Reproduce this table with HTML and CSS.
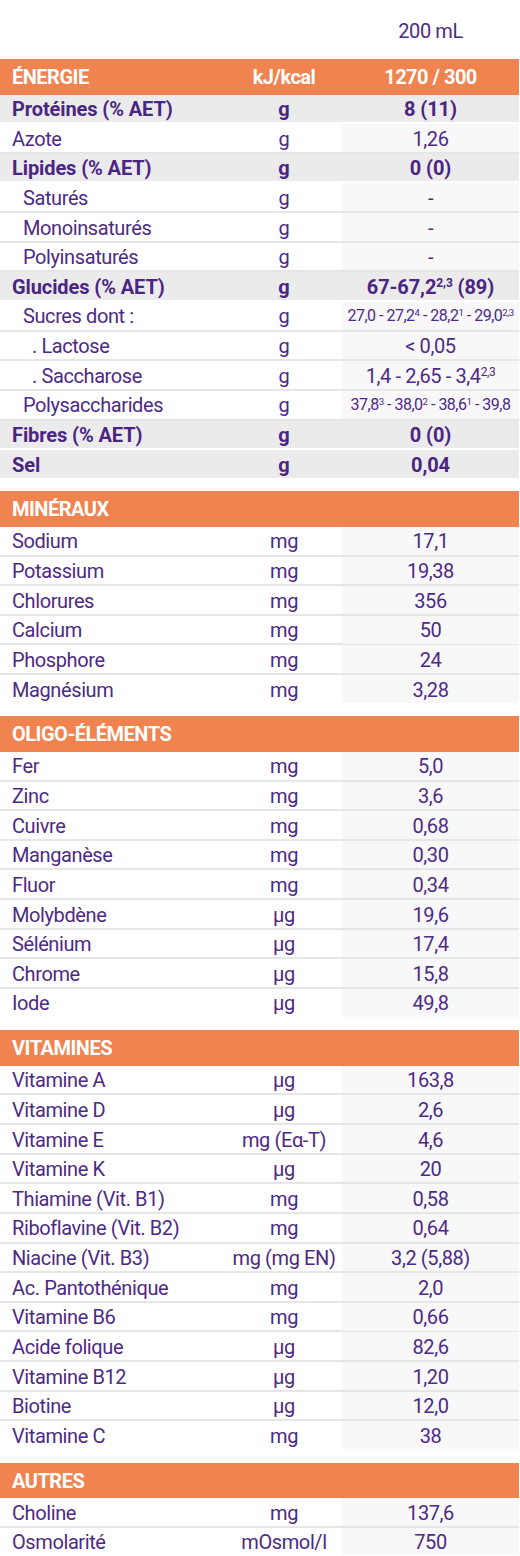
FILE: index.html
```html
<!DOCTYPE html>
<html lang="fr">
<head>
<meta charset="utf-8">
<link rel="stylesheet" href="styles.css">
</head>
<body>
<div class="page">
  <div class="top"><span class="c1"></span><span class="c2"></span><span class="c3">200 mL</span></div>

  <section class="sec">
    <div class="head"><span class="c1">ÉNERGIE</span><span class="c2">kJ/kcal</span><span class="c3">1270 / 300</span></div>
    <div class="row b"><span class="c1">Protéines (% AET)</span><span class="c2">g</span><span class="c3">8 (11)</span></div>
    <div class="row"><span class="c1">Azote</span><span class="c2">g</span><span class="c3">1,26</span></div>
    <div class="row b"><span class="c1">Lipides (% AET)</span><span class="c2">g</span><span class="c3">0 (0)</span></div>
    <div class="row"><span class="c1 i1">Saturés</span><span class="c2">g</span><span class="c3">-</span></div>
    <div class="row"><span class="c1 i1">Monoinsaturés</span><span class="c2">g</span><span class="c3">-</span></div>
    <div class="row"><span class="c1 i1">Polyinsaturés</span><span class="c2">g</span><span class="c3">-</span></div>
    <div class="row b"><span class="c1">Glucides (% AET)</span><span class="c2">g</span><span class="c3">67-67,2<sup>2,3</sup> (89)</span></div>
    <div class="row"><span class="c1 i1">Sucres dont :</span><span class="c2">g</span><span class="c3 sm">27,0 - 27,2<sup>4</sup> - 28,2<sup>1</sup> - 29,0<sup>2,3</sup></span></div>
    <div class="row"><span class="c1 i2">. Lactose</span><span class="c2">g</span><span class="c3">&lt; 0,05</span></div>
    <div class="row"><span class="c1 i2">. Saccharose</span><span class="c2">g</span><span class="c3">1,4 - 2,65 - 3,4<sup>2,3</sup></span></div>
    <div class="row"><span class="c1 i1">Polysaccharides</span><span class="c2">g</span><span class="c3 sm">37,8<sup>3</sup> - 38,0<sup>2</sup> - 38,6<sup>1</sup> - 39,8</span></div>
    <div class="row b"><span class="c1">Fibres (% AET)</span><span class="c2">g</span><span class="c3">0 (0)</span></div>
    <div class="row b"><span class="c1">Sel</span><span class="c2">g</span><span class="c3">0,04</span></div>
  </section>

  <section class="sec">
    <div class="head"><span class="c1">MINÉRAUX</span><span class="c2"></span><span class="c3"></span></div>
    <div class="row"><span class="c1">Sodium</span><span class="c2">mg</span><span class="c3">17,1</span></div>
    <div class="row"><span class="c1">Potassium</span><span class="c2">mg</span><span class="c3">19,38</span></div>
    <div class="row"><span class="c1">Chlorures</span><span class="c2">mg</span><span class="c3">356</span></div>
    <div class="row"><span class="c1">Calcium</span><span class="c2">mg</span><span class="c3">50</span></div>
    <div class="row"><span class="c1">Phosphore</span><span class="c2">mg</span><span class="c3">24</span></div>
    <div class="row"><span class="c1">Magnésium</span><span class="c2">mg</span><span class="c3">3,28</span></div>
  </section>

  <section class="sec">
    <div class="head"><span class="c1">OLIGO-ÉLÉMENTS</span><span class="c2"></span><span class="c3"></span></div>
    <div class="row"><span class="c1">Fer</span><span class="c2">mg</span><span class="c3">5,0</span></div>
    <div class="row"><span class="c1">Zinc</span><span class="c2">mg</span><span class="c3">3,6</span></div>
    <div class="row"><span class="c1">Cuivre</span><span class="c2">mg</span><span class="c3">0,68</span></div>
    <div class="row"><span class="c1">Manganèse</span><span class="c2">mg</span><span class="c3">0,30</span></div>
    <div class="row"><span class="c1">Fluor</span><span class="c2">mg</span><span class="c3">0,34</span></div>
    <div class="row"><span class="c1">Molybdène</span><span class="c2">µg</span><span class="c3">19,6</span></div>
    <div class="row"><span class="c1">Sélénium</span><span class="c2">µg</span><span class="c3">17,4</span></div>
    <div class="row"><span class="c1">Chrome</span><span class="c2">µg</span><span class="c3">15,8</span></div>
    <div class="row"><span class="c1">Iode</span><span class="c2">µg</span><span class="c3">49,8</span></div>
  </section>

  <section class="sec">
    <div class="head"><span class="c1">VITAMINES</span><span class="c2"></span><span class="c3"></span></div>
    <div class="row"><span class="c1">Vitamine A</span><span class="c2">µg</span><span class="c3">163,8</span></div>
    <div class="row"><span class="c1">Vitamine D</span><span class="c2">µg</span><span class="c3">2,6</span></div>
    <div class="row"><span class="c1">Vitamine E</span><span class="c2">mg (Eα-T)</span><span class="c3">4,6</span></div>
    <div class="row"><span class="c1">Vitamine K</span><span class="c2">µg</span><span class="c3">20</span></div>
    <div class="row"><span class="c1">Thiamine (Vit. B1)</span><span class="c2">mg</span><span class="c3">0,58</span></div>
    <div class="row"><span class="c1">Riboflavine (Vit. B2)</span><span class="c2">mg</span><span class="c3">0,64</span></div>
    <div class="row"><span class="c1">Niacine (Vit. B3)</span><span class="c2">mg (mg EN)</span><span class="c3">3,2 (5,88)</span></div>
    <div class="row"><span class="c1">Ac. Pantothénique</span><span class="c2">mg</span><span class="c3">2,0</span></div>
    <div class="row"><span class="c1">Vitamine B6</span><span class="c2">mg</span><span class="c3">0,66</span></div>
    <div class="row"><span class="c1">Acide folique</span><span class="c2">µg</span><span class="c3">82,6</span></div>
    <div class="row"><span class="c1">Vitamine B12</span><span class="c2">µg</span><span class="c3">1,20</span></div>
    <div class="row"><span class="c1">Biotine</span><span class="c2">µg</span><span class="c3">12,0</span></div>
    <div class="row"><span class="c1">Vitamine C</span><span class="c2">mg</span><span class="c3">38</span></div>
  </section>

  <section class="sec">
    <div class="head"><span class="c1">AUTRES</span><span class="c2"></span><span class="c3"></span></div>
    <div class="row"><span class="c1">Choline</span><span class="c2">mg</span><span class="c3">137,6</span></div>
    <div class="row"><span class="c1">Osmolarité</span><span class="c2">mOsmol/l</span><span class="c3">750</span></div>
  </section>
</div>
</body>
</html>
```

FILE: styles.css
```css
html, body {
  margin: 0;
  padding: 0;
  background: #ffffff;
}

.page {
  width: 519px;
  font-family: Roboto, "DejaVu Sans Condensed", sans-serif;
  font-size: 20px;
  letter-spacing: -0.4px;
  color: #4d2a85;
}

.top,
.head,
.row {
  display: grid;
  grid-template-columns: 226px 116px 177px;
}

.top {
  height: 59px;
}

.top .c3 {
  line-height: 62px;
}

.sec + .sec {
  margin-top: 11.6px;
}

.head {
  height: 35.5px;
  line-height: 35.5px;
  background: #f0834f;
  color: #ffffff;
  font-weight: bold;
  letter-spacing: -0.5px;
}

.head .c1,
.head .c2,
.head .c3 {
  padding-top: 1px;
  line-height: 34.5px;
}

.row {
  height: 27.65px;
  border-bottom: 2px solid #e6e6e6;
}

.row .c1,
.row .c2,
.row .c3 {
  padding-top: 1.5px;
  line-height: 26.15px;
}

.row:last-child {
  border-bottom-color: transparent;
}

.c1,
.c2,
.c3 {
  display: block;
  white-space: nowrap;
}

.c1 {
  padding-left: 12px;
}

.c1.i1 {
  padding-left: 23px;
}

.c1.i2 {
  padding-left: 32px;
}

.c2,
.c3 {
  text-align: center;
}

.row .c3 {
  background: #f8f8f8;
}

.row.b {
  background: #ebebeb;
  border-bottom-color: #ffffff;
  font-weight: bold;
  letter-spacing: -0.1px;
  color: #4a2582;
}

.row.b .c3 {
  background: transparent;
}

.c3.sm {
  font-size: 16px;
  letter-spacing: -0.5px;
}

sup {
  font-size: 0.6em;
  line-height: 0;
  position: relative;
  top: -0.6em;
  vertical-align: baseline;
}
```
